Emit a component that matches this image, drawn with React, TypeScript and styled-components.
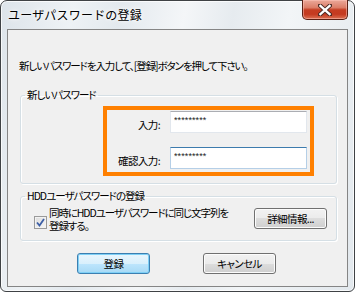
import React from "react";
import styled, { createGlobalStyle } from "styled-components";

const Global = createGlobalStyle`
  html, body { margin: 0; padding: 0; background: #ffffff; }
  body { font-family: "Noto Sans CJK JP", "Noto Sans", sans-serif; color: #000; }
  * { box-sizing: border-box; }
`;

const Window = styled.div`
  width: 355px;
  border: 1px solid #3f4245;
  border-radius: 7px 7px 6px 6px;
  padding: 0 6px 4px 6px;
  background: linear-gradient(100deg, #dde4ea 0%, #eef2f5 18%, #e3e9ee 30%, #f4f6f8 46%, #e6ebef 58%, #f2f5f7 72%, #e2e8ed 100%);
  box-shadow: inset 0 0 0 1px rgba(255, 255, 255, 0.75);
`;

const TitleBar = styled.div`
  height: 28px;
  display: flex;
  justify-content: space-between;
  align-items: flex-start;
  padding-left: 1px;
`;

const Title = styled.div`
  margin-top: 7px;
  font-size: 12px;
  line-height: 14px;
  letter-spacing: 0.2px;
  color: #000;
  text-shadow: 0 0 6px #fff, 0 0 3px #fff;
`;

const CloseButton = styled.div`
  width: 46px;
  height: 20px;
  margin-top: -1px;
  border: 1px solid #5a2014;
  border-top: none;
  border-radius: 0 0 5px 5px;
  background: linear-gradient(#eba99a 0%, #dc7e68 40%, #c53d22 52%, #c43a20 75%, #dc7153 100%);
  box-shadow: inset 0 0 0 1px rgba(255, 200, 190, 0.5);
  display: flex;
  align-items: center;
  justify-content: center;
`;

const Client = styled.div`
  border: 1px solid #858585;
  background: #f0f0f0;
  padding: 29px 10px 12px 12px;
  display: flex;
  flex-direction: column;
`;

const Instruction = styled.div`
  margin-left: -1px;
  font-size: 10.5px;
  line-height: 14px;
  letter-spacing: -1.1px;
  font-feature-settings: "palt";
  white-space: nowrap;
`;

const Group = styled.fieldset<{ $top: number }>`
  margin: ${(p) => p.$top}px 0 0 0;
  padding: 0;
  border: 1px solid #d5dfe5;
  border-radius: 3px;
  box-shadow: inset 1px 1px 0 #ffffff, 1px 1px 0 #ffffff;
  min-width: 0;
`;

const Legend = styled.legend`
  margin-left: 4px;
  padding: 0 2px;
  font-size: 10.5px;
  line-height: 14px;
  letter-spacing: -1px;
  font-feature-settings: "palt";
  white-space: nowrap;
`;

const Highlight = styled.div`
  margin: 4px 0 7px 82px;
  width: 211px;
  border: 4px solid #ff8000;
  padding: 1px 3px 3px 0;
  display: grid;
  grid-template-columns: 53px 137px;
  column-gap: 10px;
  row-gap: 14px;
`;

const FieldLabel = styled.label`
  align-self: center;
  justify-self: end;
  margin-top: 5px;
  font-size: 10.5px;
  line-height: 14px;
  letter-spacing: -0.6px;
  font-feature-settings: "palt";
  white-space: nowrap;
`;

const TextBox = styled.input<{ $focused?: boolean }>`
  width: 137px;
  height: 22px;
  margin: 0;
  padding: 0 0 4px 3px;
  background: #ffffff;
  border: 1px solid ${(p) => (p.$focused ? "#b5cfe7" : "#e2e7ed")};
  border-top-color: ${(p) => (p.$focused ? "#3d7bad" : "#abadb3")};
  font-family: "Liberation Sans", sans-serif;
  font-size: 9px;
  letter-spacing: 0.1px;
  color: #222;
  outline: none;
`;

const OptionRow = styled.div`
  display: flex;
  align-items: flex-start;
  padding: 3px 9px 8px 13px;
`;

const CheckBox = styled.span`
  width: 13px;
  height: 13px;
  margin-top: 10px;
  flex: none;
  border: 1px solid #9a9a9a;
  background: linear-gradient(135deg, #dcdcdc, #f6f6f6);
  box-shadow: inset 0 0 0 1px #f2f2f2;
  display: flex;
  align-items: center;
  justify-content: center;
`;

const OptionText = styled.div`
  margin-left: 2px;
  font-size: 10.5px;
  line-height: 13px;
  letter-spacing: -1.1px;
  font-feature-settings: "palt";
  white-space: nowrap;
`;

const PushButton = styled.button<{ $default?: boolean }>`
  width: 73px;
  height: 21px;
  margin: 0;
  padding: 0;
  flex: none;
  border: 1px solid ${(p) => (p.$default ? "#3c7fb1" : "#707070")};
  border-radius: 3px;
  background: ${(p) =>
    p.$default
      ? "linear-gradient(#eaf6fd 0%, #d9f0fc 50%, #bee6fd 50%, #a7d9f5 100%)"
      : "linear-gradient(#f2f2f2 0%, #ebebeb 50%, #dddddd 50%, #cfcfcf 100%)"};
  box-shadow: inset 0 0 0 1px ${(p) => (p.$default ? "#7fd0f6" : "#fcfcfc")};
  font-family: "Noto Sans CJK JP", sans-serif;
  font-size: 10.5px;
  line-height: 14px;
  letter-spacing: -0.6px;
  font-feature-settings: "palt";
  color: #000;
`;

const DetailButton = styled(PushButton)`
  margin-left: auto;
  margin-top: 2px;
`;

const ButtonRow = styled.div`
  display: flex;
  gap: 53px;
  margin-top: 12px;
  padding-left: 57px;
`;

export default function App() {
  return (
    <>
      <Global />
      <Window>
        <TitleBar>
          <Title>ユーザパスワードの登録</Title>
          <CloseButton>
            <svg width="14" height="12" viewBox="0 0 14 12">
              <path d="M2 1.5 L12 10.5 M12 1.5 L2 10.5" stroke="#4a2a24" strokeWidth="4.2" strokeLinecap="square" />
              <path d="M2.4 1.9 L11.6 10.1 M11.6 1.9 L2.4 10.1" stroke="#ffffff" strokeWidth="2.3" strokeLinecap="square" />
            </svg>
          </CloseButton>
        </TitleBar>
        <Client>
          <Instruction>新しいパスワードを入力して、[登録]ボタンを押して下さい。</Instruction>
          <Group $top={15}>
            <Legend>新しいパスワード</Legend>
            <Highlight>
              <FieldLabel>入力:</FieldLabel>
              <TextBox readOnly value="*********" />
              <FieldLabel>確認入力:</FieldLabel>
              <TextBox readOnly $focused value="*********" />
            </Highlight>
          </Group>
          <Group $top={5}>
            <Legend>HDDユーザパスワードの登録</Legend>
            <OptionRow>
              <CheckBox>
                <svg width="9" height="9" viewBox="0 0 9 9">
                  <path d="M1 4.5 L3.5 7.5 L8 1" fill="none" stroke="#3d5fa6" strokeWidth="1.8" />
                </svg>
              </CheckBox>
              <OptionText>
                同時にHDDユーザパスワードに同じ文字列を
                <br />
                登録する。
              </OptionText>
              <DetailButton>詳細情報...</DetailButton>
            </OptionRow>
          </Group>
          <ButtonRow>
            <PushButton $default>登録</PushButton>
            <PushButton>キャンセル</PushButton>
          </ButtonRow>
        </Client>
      </Window>
    </>
  );
}
